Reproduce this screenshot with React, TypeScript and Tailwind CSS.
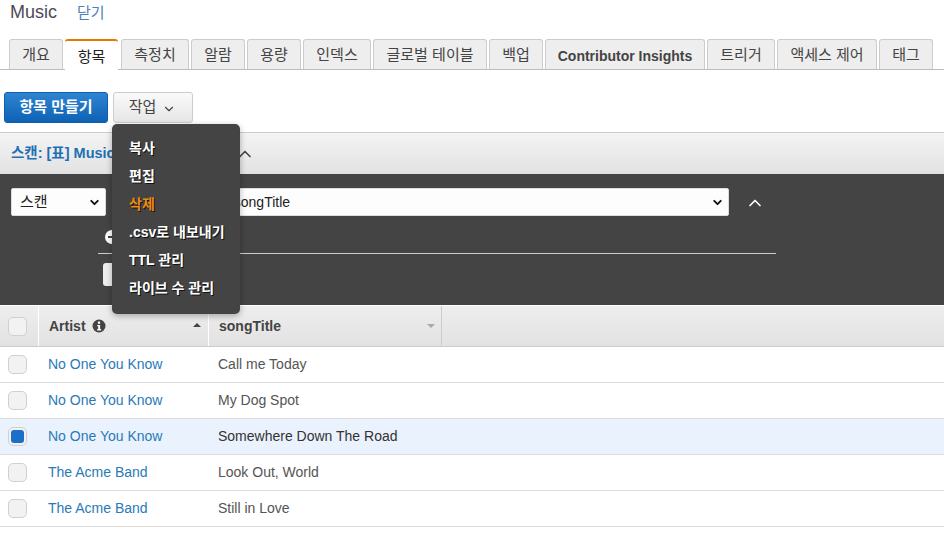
import { ChevronDown, ChevronUp } from 'lucide-react'

const FONT = "font-['Liberation_Sans','Noto_Sans_CJK_KR',sans-serif]"

const tabs = [
  { label: '개요', width: 'w-[54px]' },
  { label: '항목', width: 'mr-[1px] w-[53px]', active: true },
  { label: '측정치', width: 'w-[68px]' },
  { label: '알람', width: 'w-[54px]' },
  { label: '용량', width: 'w-[54px]' },
  { label: '인덱스', width: 'w-[68px]' },
  { label: '글로벌 테이블', width: 'w-[114px]' },
  { label: '백업', width: 'w-[54px]' },
  { label: 'Contributor Insights', width: 'w-[160px]', bold: true },
  { label: '트리거', width: 'w-[68px]' },
  { label: '액세스 제어', width: 'w-[100px]' },
  { label: '태그', width: 'w-[54px]' },
]

const menuItems = ['복사', '편집', '삭제', '.csv로 내보내기', 'TTL 관리', '라이브 수 관리']

const rows = [
  { artist: 'No One You Know', song: 'Call me Today' },
  { artist: 'No One You Know', song: 'My Dog Spot' },
  { artist: 'No One You Know', song: 'Somewhere Down The Road', selected: true },
  { artist: 'The Acme Band', song: 'Look Out, World' },
  { artist: 'The Acme Band', song: 'Still in Love' },
]

function Checkbox({ checked }: { checked?: boolean }) {
  return (
    <span className="flex h-[19px] w-[19px] items-center justify-center rounded-[5px] border border-[#d0d0d0] bg-[#f2f2f2]">
      {checked && <span className="h-[13px] w-[13px] rounded-[3px] bg-[#1a6fc9]" />}
    </span>
  )
}

function InfoDot() {
  return (
    <svg viewBox="0 0 14 14" className="ml-[6px] h-[14px] w-[14px]">
      <circle cx="7" cy="7" r="6.5" fill="#444" />
      <rect x="5.9" y="2.6" width="2.2" height="2.2" rx="0.6" fill="#fff" />
      <path d="M5.2 6h2.9v4.1h1v1.3H5.2v-1.3h1V7.3h-1z" fill="#fff" />
    </svg>
  )
}

export default function App() {
  return (
    <div className={`${FONT} relative h-[540px] w-[944px] overflow-hidden bg-white text-[14px] text-[#444]`}>
      <div className="flex h-[39px] items-start pl-[10px] pt-[1px]">
        <span className="text-[18px] leading-[22px] text-[#4b4b55]">Music</span>
        <a className="ml-[20px] text-[15px] leading-[24px] text-[#4f7fb8]">닫기</a>
      </div>

      <div className="flex h-[31px] gap-[2px] border-b border-[#bbb] pl-[9px]">
        {tabs.map((tab) =>
          tab.active ? (
            <div
              key={tab.label}
              className={`${tab.width} z-10 flex h-[32px] items-center justify-center rounded-t-[3px] border-t-2 border-[#e07b00] bg-white pt-[2px] text-[15px] text-[#222]`}
            >
              {tab.label}
            </div>
          ) : (
            <div
              key={tab.label}
              className={`${tab.width} flex h-[30px] items-center justify-center rounded-t-[3px] border border-b-0 border-[#ccc] bg-[#eee] ${tab.bold ? 'pt-[4px] text-[14px] font-bold' : 'pt-[2px] text-[15px]'}`}
            >
              {tab.label}
            </div>
          ),
        )}
      </div>

      <div className="flex h-[62px] items-start gap-[5px] pl-[4px] pt-[22px]">
        <button className="flex h-[31px] w-[104px] items-center justify-center rounded-[3px] border border-[#0f5fae] bg-gradient-to-b from-[#2d84d2] to-[#0e62b4] text-[15px] font-bold text-white">
          항목 만들기
        </button>
        <button className="flex h-[31px] w-[80px] items-center justify-center gap-[6px] rounded-[3px] border border-[#ccc] bg-gradient-to-b from-[#fafafa] to-[#e6e6e6] pr-[1px] text-[15px] text-[#444]">
          작업
          <ChevronDown className="mt-[2px] h-[14px] w-[14px]" strokeWidth={2} />
        </button>
      </div>

      <div className="flex h-[42px] items-center border-t border-[#ccc] bg-gradient-to-b from-[#f4f4f4] to-[#e2e2e2] pl-[11px] pt-[1px]">
        <span className="text-[14.5px] font-bold text-[#1f6fb5]">스캔: [표] Music: Artist, songTitle</span>
        <ChevronUp className="ml-[2px] h-[20px] w-[20px] text-[#444]" strokeWidth={2} />
      </div>

      <div className="h-[131px] bg-[#444] pt-[14px]">
        <div className="flex items-center pl-[11px]">
          <div className="flex h-[28px] w-[95px] items-center justify-between rounded-[2px] border border-[#ddd] bg-[#fdfdfd] pl-[8px] pr-[4px] text-[15px] text-[#222]">
            스캔
            <ChevronDown className="h-[13px] w-[13px] text-[#111]" strokeWidth={3.5} />
          </div>
          <div className="ml-[14px] flex h-[28px] w-[609px] items-center justify-between rounded-[2px] border border-[#ddd] bg-[#fdfdfd] pl-[5px] pr-[4px] text-[#222]">
            [표] Music: Artist, songTitle
            <ChevronDown className="h-[13px] w-[13px] text-[#111]" strokeWidth={3.5} />
          </div>
          <ChevronUp className="ml-[16px] mt-[2px] h-[20px] w-[20px] text-white" strokeWidth={2} />
        </div>
        <div className="ml-[98px] mt-[9px] h-[29px] w-[678px] border-b border-[#ccc] pl-[7px] pt-[5px]">
          <span className="flex h-[14px] w-[14px] items-center justify-center rounded-full bg-white">
            <span className="h-[2px] w-[8px] bg-[#444]" />
          </span>
        </div>
        <div className="ml-[103px] mt-[9px] h-[23px] w-[80px] rounded-[3px] bg-[#eee]" />
      </div>

      <div className="flex h-[42px] border-y border-t-white border-b-[#ccc] bg-gradient-to-b from-[#eeeeee] to-[#e2e2e2]">
        <div className="flex w-[38px] items-center pl-[8px]">
          <Checkbox />
        </div>
        <div className="flex w-[170px] items-center border-l border-white pl-[10px] pr-[7px]">
          <span className="font-bold">Artist</span>
          <InfoDot />
          <span className="ml-auto mb-[2px] h-0 w-0 border-x-[4px] border-b-[4px] border-x-transparent border-b-[#444]" />
        </div>
        <div className="flex w-[234px] items-center justify-between border-x border-l-white border-r-[#ccc] pl-[10px] pr-[6px]">
          <span className="font-bold">songTitle</span>
          <span className="h-0 w-0 border-x-[4px] border-t-[4px] border-x-transparent border-t-[#aaa]" />
        </div>
      </div>

      {rows.map((row, i) => (
        <div
          key={i}
          className={`flex h-[36px] items-center border-b border-[#ddd] pl-[8px] ${row.selected ? 'bg-[#eaf2fd] text-[#333]' : 'bg-white text-[#555]'}`}
        >
          <Checkbox checked={row.selected} />
          <a className="ml-[21px] w-[170px] text-[#2a7ab8]">{row.artist}</a>
          <span>{row.song}</span>
        </div>
      ))}

      <div className="absolute left-[112px] top-[124px] flex h-[190px] w-[128px] flex-col rounded-[5px] bg-[#444] py-[10px] pl-[17px] text-[14px] font-bold text-white shadow-[0_2px_6px_rgba(0,0,0,0.3)] [text-shadow:1px_1px_0_#111]">
        {menuItems.map((item) => (
          <div key={item} className={`flex h-[28px] items-center ${item === '삭제' ? 'text-[#ec8c13]' : ''}`}>
            {item}
          </div>
        ))}
      </div>
    </div>
  )
}
